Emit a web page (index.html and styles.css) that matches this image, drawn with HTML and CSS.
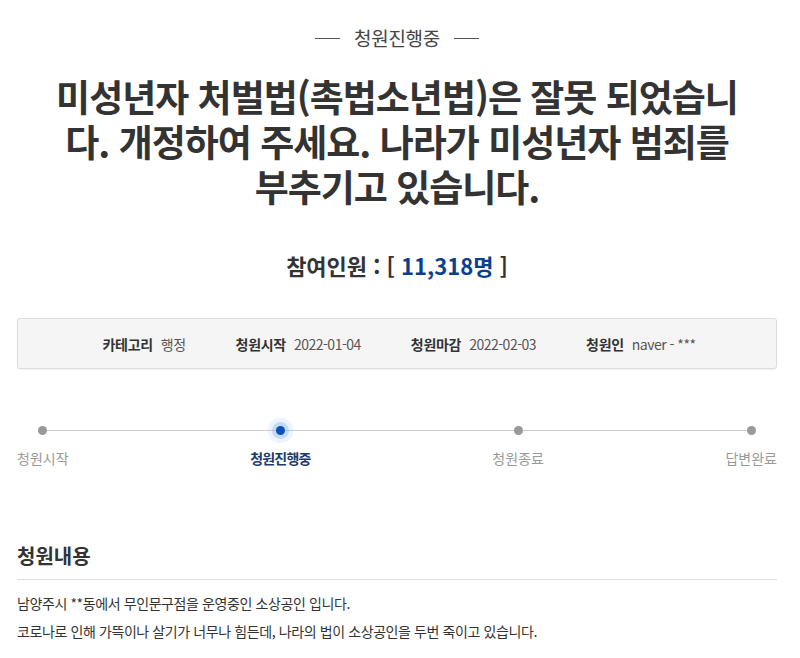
FILE: index.html
```html
<!DOCTYPE html>
<html lang="ko">
<head>
<meta charset="utf-8">
<link rel="stylesheet" href="styles.css">
</head>
<body>
<div class="page">
  <div class="status"><span class="dash"></span><span>청원진행중</span><span class="dash"></span></div>
  <h1 class="title">미성년자 처벌법(촉법소년법)은 잘못 되었습니다. 개정하여 주세요. 나라가 미성년자 범죄를 부추기고 있습니다.</h1>
  <div class="count">참여인원 : [ <span class="num">11,318명</span> ]</div>
  <div class="info">
    <div class="item"><b>카테고리</b><span>행정</span></div>
    <div class="item"><b>청원시작</b><span>2022-01-04</span></div>
    <div class="item"><b>청원마감</b><span>2022-02-03</span></div>
    <div class="item"><b>청원인</b><span>naver - ***</span></div>
  </div>
  <div class="progress">
    <div class="track"></div>
    <div class="step"><i class="dot"></i><span>청원시작</span></div>
    <div class="step active"><i class="dot"></i><span>청원진행중</span></div>
    <div class="step"><i class="dot"></i><span>청원종료</span></div>
    <div class="step"><i class="dot"></i><span>답변완료</span></div>
  </div>
  <h2 class="sec">청원내용</h2>
  <div class="content">
    <p>남양주시 **동에서 무인문구점을 운영중인 소상공인 입니다.</p>
    <p>코로나로 인해 가뜩이나 살기가 너무나 힘든데, 나라의 법이 소상공인을 두번 죽이고 있습니다.</p>
  </div>
</div>
</body>
</html>
```
FILE: styles.css
```css
* { box-sizing: border-box; }
html, body { margin: 0; padding: 0; background: #fff; }
body {
  font-family: "Noto Sans CJK KR", "Noto Sans", sans-serif;
  color: #333;
}
.page { padding: 0 23px 0 17px; width: 800px; }
.status {
  display: flex; justify-content: center; align-items: center;
  gap: 14px; padding-top: 26px; height: 50px; line-height: 24px;
  font-size: 19px; color: #444; letter-spacing: -0.3px;
}
.status .dash { display: block; width: 25px; height: 1px; background: #555; }
.title {
  margin: 24px auto 0; text-align: center; width: 695px;
  font-size: 37px; line-height: 45px; font-weight: 700; color: #333;
  letter-spacing: -1px;
}
.count {
  margin-top: 41px; text-align: center;
  font-size: 22px; font-weight: 700; color: #333; line-height: 30px;
}
.count .num { color: #0b3f8e; }
.info {
  margin-top: 38px; height: 51px;
  border: 1px solid #ddd; border-radius: 3px; background: #f5f5f5;
  box-shadow: 0 1px 2px rgba(0,0,0,0.06);
  display: flex; align-items: center; justify-content: center; gap: 50px;
  font-size: 14px; padding-left: 4px;
}
.info .item { display: flex; gap: 8px; }
.info .item b { font-weight: 700; color: #333; letter-spacing: -0.3px; }
.info .item span { color: #555; letter-spacing: -0.5px; }
.progress {
  position: relative; margin-top: 55px;
  display: flex; justify-content: space-between;
}
.track {
  position: absolute; left: 25px; right: 25px; top: 6px; height: 1px; background: #ccc;
}
.step { display: flex; flex-direction: column; align-items: center; position: relative; }
.dot {
  display: block; width: 9px; height: 9px; border-radius: 50%; background: #999;
  margin: 2px 0;
}
.step span { margin-top: 11px; font-size: 14px; color: #999; line-height: 20px; }
.step.active .dot {
  background: #0c52b4;
  box-shadow: 0 0 0 4px rgba(120,170,240,0.35), 0 0 0 8px rgba(160,200,250,0.2);
}
.step.active span { color: #1d3a6b; font-weight: 700; letter-spacing: -0.8px; }
.sec {
  margin: 75px 0 0; font-size: 20px; font-weight: 700; color: #333;
  padding-bottom: 10px; border-bottom: 1px solid #ddd; line-height: 26px;
}
.content { padding-top: 9px; font-size: 14px; color: #333; letter-spacing: -0.4px; }
.content p { margin: 0; line-height: 28px; }
```
